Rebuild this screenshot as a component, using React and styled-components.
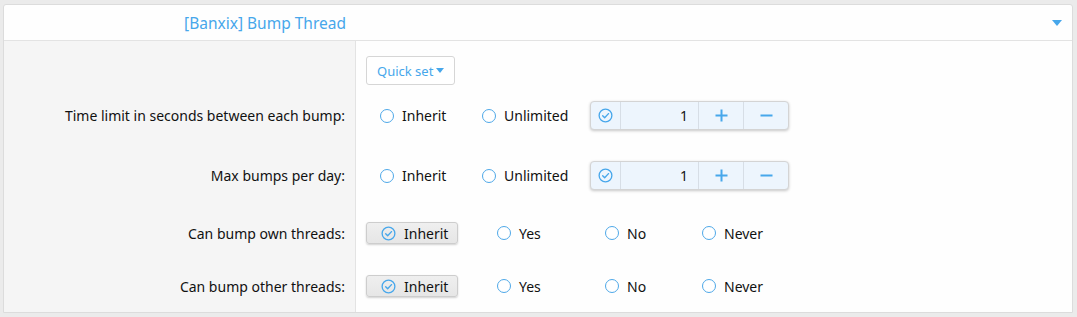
import React from "react";
import styled, { createGlobalStyle } from "styled-components";

const Global = createGlobalStyle`
  html, body { margin: 0; padding: 0; }
  body {
    background: #ebebeb;
    font-family: "Noto Sans", "Open Sans", "DejaVu Sans", sans-serif;
    color: #141414;
    -webkit-font-smoothing: antialiased;
  }
`;

const Page = styled.div`
  padding: 4px 4px 0 3px;
`;

const Block = styled.div`
  background: #fefefe;
  border: 1px solid #dcdcdc;
  border-radius: 3px 3px 0 0;
`;

const Header = styled.div`
  display: grid;
  grid-template-columns: 352px 1fr;
  align-items: center;
  height: 35px;
  border-bottom: 1px solid #e3e3e3;
`;

const Title = styled.div`
  text-align: right;
  padding-right: 10px;
  font-size: 15.5px;
  color: #47a7eb;
`;

const Toggle = styled.div`
  display: flex;
  justify-content: flex-end;
  padding-right: 10px;
`;

const Row = styled.div`
  display: grid;
  grid-template-columns: 352px 1fr;
`;

const Label = styled.div`
  background: #f5f5f5;
  border-right: 1px solid #e3e3e3;
  display: flex;
  align-items: center;
  justify-content: flex-end;
  padding: ${(p) => p.$pt}px 10px ${(p) => p.$pb}px 0;
  font-size: 14px;
  color: #111;
`;

const Controls = styled.div`
  display: flex;
  align-items: center;
  padding: ${(p) => p.$pt}px 10px ${(p) => p.$pb}px 10px;
`;

const QuickSet = styled.button`
  display: inline-flex;
  align-items: center;
  gap: 3px;
  height: 29px;
  padding: 0 10px 0 10px;
  background: #fff;
  border: 1px solid #d6d6d6;
  border-radius: 3px;
  color: #47a7eb;
  font-family: inherit;
  font-size: 13px;
`;

const Choice = styled.label`
  display: inline-flex;
  align-items: center;
  gap: 8px;
  width: ${(p) => p.$w}px;
  height: 22px;
  box-sizing: border-box;
  padding-left: 14px;
  font-size: 14px;
  color: #111;
  flex-shrink: 0;
`;

const Selected = styled.label`
  display: inline-flex;
  align-items: center;
  gap: 8px;
  height: 22px;
  width: 92px;
  box-sizing: border-box;
  padding-left: 14px;
  margin-right: ${(p) => p.$mr}px;
  background: linear-gradient(#efefef, #e6e6e6);
  border: 1px solid #cdcdcd;
  border-radius: 3px;
  box-shadow: 0 1px 2px rgba(0, 0, 0, 0.18);
  font-size: 14px;
  color: #111;
  flex-shrink: 0;
`;

const Radio = styled.span`
  width: 14px;
  height: 14px;
  box-sizing: border-box;
  border: 1.5px solid #4ea8e8;
  border-radius: 50%;
  background: #fff;
  flex-shrink: 0;
`;

const Spinner = styled.div`
  display: flex;
  height: 29px;
  box-sizing: border-box;
  border: 1px solid #d4d4d4;
  border-radius: 4px;
  background: #edf5fd;
  box-shadow: 0 1px 3px rgba(0, 0, 0, 0.22);
  overflow: hidden;
  margin-left: ${(p) => p.$ml}px;
`;

const Cell = styled.div`
  display: flex;
  align-items: center;
  justify-content: ${(p) => (p.$right ? "flex-end" : "center")};
  width: ${(p) => p.$w}px;
  padding-right: ${(p) => (p.$right ? 10 : 0)}px;
  box-sizing: border-box;
  border-left: ${(p) => (p.$first ? "none" : "1px solid #d7dee6")};
  font-size: 14px;
  color: #141414;
`;

const Check = () => (
  <svg width="15" height="15" viewBox="0 0 16 16" fill="none">
    <circle cx="8" cy="8" r="6.8" stroke="#47a7eb" strokeWidth="1.4" />
    <path d="M5 8.2l2.1 2.1L11.2 6" stroke="#47a7eb" strokeWidth="1.5" strokeLinecap="round" strokeLinejoin="round" />
  </svg>
);

const Plus = () => (
  <svg width="13" height="13" viewBox="0 0 13 13">
    <path d="M6.5 0.5v12M0.5 6.5h12" stroke="#47a7eb" strokeWidth="2" />
  </svg>
);

const Minus = () => (
  <svg width="13" height="13" viewBox="0 0 13 13">
    <path d="M0.5 6.5h12" stroke="#47a7eb" strokeWidth="2" />
  </svg>
);

const Caret = () => (
  <svg width="8" height="5" viewBox="0 0 8 5">
    <path d="M0 0h8L4 5z" fill="#47a7eb" />
  </svg>
);

const BigCaret = () => (
  <svg width="10" height="6" viewBox="0 0 10 6">
    <path d="M0 0h10L5 6z" fill="#47a7eb" />
  </svg>
);

const NumberField = () => (
  <Spinner $ml={23}>
    <Cell $first $w={29}><Check /></Cell>
    <Cell $w={78} $right>1</Cell>
    <Cell $w={45}><Plus /></Cell>
    <Cell $w={45}><Minus /></Cell>
  </Spinner>
);

const numericRows = [
  { label: "Time limit in seconds between each bump:", pt: 9, pb: 16 },
  { label: "Max bumps per day:", pt: 15, pb: 16 },
];

const boolRows = [
  { label: "Can bump own threads:", pt: 16, pb: 15 },
  { label: "Can bump other threads:", pt: 16, pb: 15 },
];

export default function App() {
  return (
    <>
      <Global />
      <Page>
        <Block>
          <Header>
            <Title>[Banxix] Bump Thread</Title>
            <Toggle><BigCaret /></Toggle>
          </Header>
          <Row>
            <Label $pt={15} $pb={7} />
            <Controls $pt={15} $pb={7}>
              <QuickSet>Quick set <Caret /></QuickSet>
            </Controls>
          </Row>
          {numericRows.map((r) => (
            <Row key={r.label}>
              <Label $pt={r.pt} $pb={r.pb}>{r.label}</Label>
              <Controls $pt={r.pt} $pb={r.pb}>
                <Choice $w={102}><Radio />Inherit</Choice>
                <Choice $w={99}><Radio />Unlimited</Choice>
                <NumberField />
              </Controls>
            </Row>
          ))}
          {boolRows.map((r) => (
            <Row key={r.label}>
              <Label $pt={r.pt} $pb={r.pb}>{r.label}</Label>
              <Controls $pt={r.pt} $pb={r.pb}>
                <Selected $mr={25}><Check />Inherit</Selected>
                <Choice $w={108}><Radio />Yes</Choice>
                <Choice $w={97}><Radio />No</Choice>
                <Choice $w={100}><Radio />Never</Choice>
              </Controls>
            </Row>
          ))}
        </Block>
      </Page>
    </>
  );
}
